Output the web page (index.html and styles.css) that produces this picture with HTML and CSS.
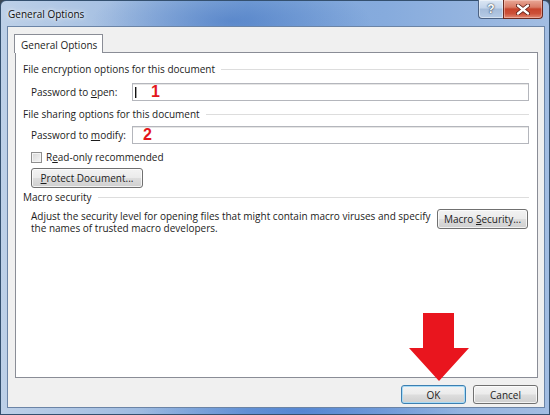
FILE: index.html
```html
<!DOCTYPE html>
<html lang="en">
<head>
<meta charset="utf-8">
<title>General Options</title>
<link rel="stylesheet" href="styles.css">
</head>
<body>
<div class="window">
  <div class="titlebar">
    <span class="title">General Options</span>
    <div class="caption-buttons">
      <span class="cap-btn cap-help">?</span>
      <span class="cap-btn cap-close">
        <svg width="14" height="11" viewBox="0 0 14 11">
          <path d="M2 1.5 L12 9.5 M12 1.5 L2 9.5" stroke="#5a1a12" stroke-width="4" stroke-linecap="round"/>
          <path d="M2 1.5 L12 9.5 M12 1.5 L2 9.5" stroke="#ffffff" stroke-width="2.4" stroke-linecap="round"/>
        </svg>
      </span>
    </div>
  </div>

  <div class="client">
    <div class="tabs">
      <div class="tab">General Options</div>
    </div>

    <div class="panel">
      <div class="group-head"><span>File encryption options for this document</span></div>
      <div class="field-row">
        <label class="field-label">Password to <u>o</u>pen:</label>
        <div class="textbox"><span class="caret"></span><span class="mark mark-one">1</span></div>
      </div>

      <div class="group-head group-head-2"><span>File sharing options for this document</span></div>
      <div class="field-row field-row-2">
        <label class="field-label">Password to <u>m</u>odify:</label>
        <div class="textbox"><span class="mark mark-two">2</span></div>
      </div>

      <div class="check-row">
        <span class="checkbox"></span>
        <span class="check-label">R<u>e</u>ad-only recommended</span>
      </div>

      <div class="protect-row">
        <button class="btn btn-protect"><span><u>P</u>rotect Document...</span></button>
      </div>

      <div class="group-head group-head-3"><span>Macro security</span></div>
      <div class="macro-row">
        <p class="macro-text">Adjust the security level for opening files that might contain macro viruses and specify the names of trusted macro developers.</p>
        <button class="btn btn-macro"><span>Macro <u>S</u>ecurity...</span></button>
      </div>
    </div>

    <div class="footer">
      <button class="btn btn-default"><span>OK</span></button>
      <button class="btn"><span>Cancel</span></button>
    </div>
  </div>

  <svg class="pointer-arrow" width="60" height="68" viewBox="0 0 60 68">
    <polygon points="14,0 45,0 45,35 60,35 30,68 0,35 14,35" fill="#e9151e"/>
  </svg>
</div>
</body>
</html>
```

FILE: styles.css
```css
* {
  box-sizing: border-box;
}

html,
body {
  margin: 0;
  padding: 0;
}

body {
  width: 550px;
  height: 415px;
  overflow: hidden;
  background: #3a4756;
  font-family: "Segoe UI", "Open Sans", "Liberation Sans", sans-serif;
  font-size: 10px;
  color: #1c1c1c;
}

u {
  text-decoration: underline;
  text-underline-offset: 1px;
}

/* Aero glass frame */
.window {
  position: relative;
  width: 550px;
  height: 415px;
  display: flex;
  flex-direction: column;
  padding: 0 5px 7px 7px;
  border-radius: 6px 6px 0 0;
  border: 1px solid #34506f;
  background:
    radial-gradient(ellipse 140px 40px at 230px 20px, rgba(60, 110, 190, 0.55), rgba(60, 110, 190, 0) 100%),
    radial-gradient(ellipse 160px 30px at 300px 410px, rgba(40, 100, 200, 0.5), rgba(40, 100, 200, 0) 100%),
    linear-gradient(90deg, #bdd0e8 0%, #a6c0e2 20%, #7ea6da 45%, #86abdd 70%, #a2bde2 100%);
}

.titlebar {
  height: 26px;
  display: flex;
  justify-content: space-between;
  align-items: flex-start;
}

.title {
  line-height: 27px;
  font-size: 10px;
  color: #0e0e0e;
  text-shadow: 0 0 6px rgba(255, 255, 255, 0.9), 0 0 3px rgba(255, 255, 255, 0.9);
}

.caption-buttons {
  display: flex;
  margin-right: 1px;
  margin-top: -1px;
}

.cap-btn {
  height: 19px;
  display: flex;
  align-items: center;
  justify-content: center;
  border: 1px solid #4c6283;
  border-top: none;
}

.cap-help {
  width: 25px;
  border-radius: 0 0 0 4px;
  border-right: none;
  background: linear-gradient(#dce7f4 0%, #c3d4ea 45%, #a5bcda 50%, #b6cbe6 100%);
  box-shadow: inset 0 0 0 1px rgba(255, 255, 255, 0.45);
  color: #ffffff;
  font-family: "Liberation Sans", sans-serif;
  font-weight: bold;
  font-size: 12px;
  text-shadow: 0 0 2px #2c3d55, 0 0 1px #2c3d55;
}

.cap-close {
  width: 40px;
  border-radius: 0 0 4px 0;
  background: linear-gradient(#e9a897 0%, #d97b66 40%, #c7442c 50%, #cc5038 75%, #e08872 100%);
  box-shadow: inset 0 0 0 1px rgba(255, 220, 210, 0.45);
  border-color: #6b2a20;
}

/* Dialog client area */
.client {
  flex: 1;
  display: flex;
  flex-direction: column;
  background: #f0f0f0;
  padding-top: 7px;
  box-shadow: 0 0 0 1px #6b84a6;
}

.tabs {
  display: flex;
  padding-left: 6px;
}

.tab {
  position: relative;
  z-index: 1;
  width: 89px;
  height: 19px;
  margin-bottom: -1px;
  padding-left: 6px;
  line-height: 20px;
  background: #ffffff;
  border: 1px solid #8a8d96;
  border-bottom: none;
}

.panel {
  height: 326px;
  margin: 0 6px 0 7px;
  padding: 9px 8px 0 7px;
  background: #ffffff;
  border: 1px solid #8a8d96;
}

.group-head {
  display: flex;
  align-items: center;
  height: 15px;
  line-height: 15px;
  white-space: nowrap;
}

.group-head::after {
  content: "";
  flex: 1;
  margin-left: 6px;
  border-top: 1px solid #dddddd;
}

.group-head-2 {
  margin-top: 6px;
}

.group-head-3 {
  margin-top: 2px;
}

.field-row {
  display: flex;
  align-items: center;
  height: 18px;
  margin-top: 6px;
  padding-left: 8px;
}

.field-row-2 {
  margin-top: 4px;
}

.field-label {
  width: 101px;
  flex-shrink: 0;
}

.textbox {
  position: relative;
  flex: 1;
  height: 18px;
  display: flex;
  align-items: center;
  border: 1px solid #b4b6bc;
  box-shadow: inset 0 1px 0 #e6e6e6;
  background: #ffffff;
}

.caret {
  width: 1px;
  height: 11px;
  margin-left: 2px;
  background: #111111;
  box-shadow: 0.5px 0 0 #444444;
}

.mark {
  font-family: "Liberation Sans", Arial, sans-serif;
  font-weight: bold;
  font-size: 16px;
  line-height: 16px;
  color: #e3161d;
}

.mark-one {
  margin-left: 15px;
}

.mark-two {
  margin-left: 10px;
}

.check-row {
  display: flex;
  align-items: center;
  height: 14px;
  margin-top: 6px;
  padding-left: 8px;
}

.checkbox {
  width: 11px;
  height: 11px;
  margin-right: 4px;
  border: 1px solid #8f8f8f;
  background: linear-gradient(135deg, #d6d6d6, #f6f6f6);
  box-shadow: inset 0 0 0 1px #f4f4f4;
}

.protect-row {
  margin-top: 4px;
  padding-left: 8px;
}

.btn {
  display: flex;
  align-items: center;
  justify-content: center;
  padding: 0;
  font-family: inherit;
  font-size: 10px;
  color: #1c1c1c;
  border: 1px solid #707070;
  border-radius: 3px;
  background: linear-gradient(#f3f3f3 0%, #ebebeb 48%, #dddddd 52%, #cfcfcf 100%);
  box-shadow: inset 0 0 0 1px rgba(255, 255, 255, 0.75);
}

.btn span {
  white-space: nowrap;
}

.btn-protect {
  width: 112px;
  height: 20px;
}

.macro-row {
  display: flex;
  align-items: flex-start;
  justify-content: space-between;
  margin-top: 5px;
  padding-left: 8px;
}

/* wraps after "specify" */
.macro-text {
  width: 405px;
  margin: 0;
  line-height: 12px;
}

.btn-macro {
  width: 91px;
  height: 20px;
  margin-top: -1px;
  margin-right: 1px;
}

.footer {
  display: flex;
  justify-content: flex-end;
  gap: 7px;
  margin-top: 7px;
  padding-right: 6px;
}

.footer .btn {
  width: 65px;
  height: 19px;
}

.btn-default {
  border-color: #3c7fb1;
  box-shadow: inset 0 0 0 1px #a9dbf6;
}

/* Red callout arrow pointing at OK */
.pointer-arrow {
  position: absolute;
  left: 408px;
  top: 312px;
}
```
